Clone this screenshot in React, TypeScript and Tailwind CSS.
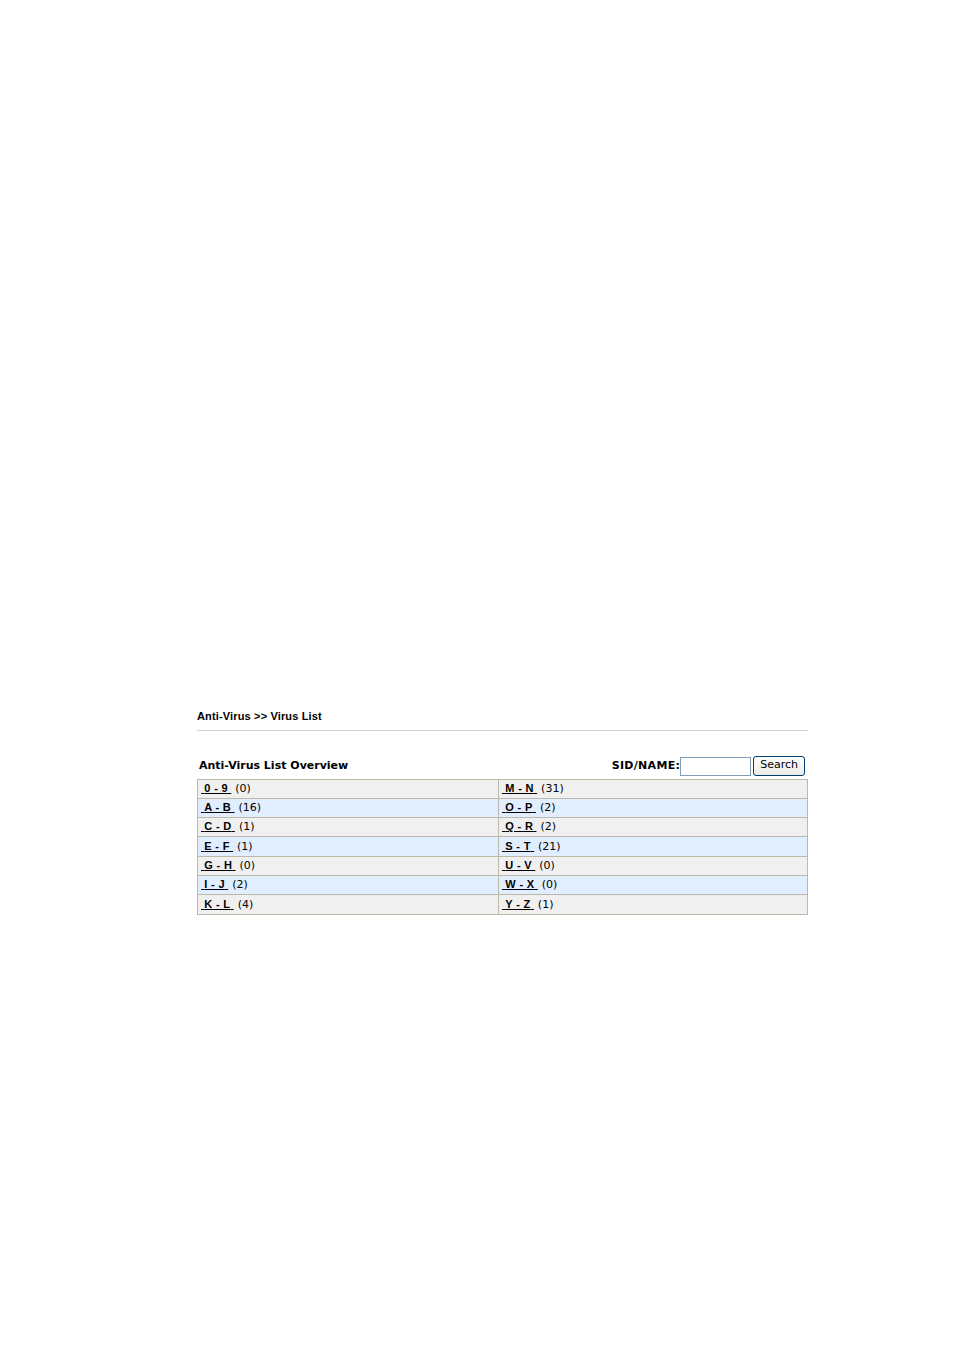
import React from 'react';

const rows: [string, number, string, number][] = [
  ['0 - 9', 0, 'M - N', 31],
  ['A - B', 16, 'O - P', 2],
  ['C - D', 1, 'Q - R', 2],
  ['E - F', 1, 'S - T', 21],
  ['G - H', 0, 'U - V', 0],
  ['I - J', 2, 'W - X', 0],
  ['K - L', 4, 'Y - Z', 1],
];

function Cell({ label, count, first }: { label: string; count: number; first?: boolean }) {
  return (
    <td className={`border border-[#bdb9a8] px-[3px] h-[19.3px] py-0 align-middle ${first ? 'w-[301px]' : ''}`}>
      <a href="#" className="font-bold underline text-black tracking-[0.3px]" style={{ fontFamily: '"Liberation Sans", Arial, sans-serif' }}>
        &nbsp;{label}&nbsp;
      </a>
      <span className="ml-[4px]">({count})</span>
    </td>
  );
}

export default function App() {
  return (
    <div className="min-h-[1351px] bg-white">
      <div className="pt-[708px] pl-[197px] w-[808px]">
        <div className="text-[11px] font-bold text-black pb-[5px] border-b border-[#d4d4d4] tracking-[0.15px]" style={{ fontFamily: '"Liberation Sans", Arial, sans-serif' }}>
          Anti-Virus &gt;&gt; Virus List
        </div>
        <div className="pt-[25px]" style={{ fontFamily: 'Verdana, "DejaVu Sans", sans-serif' }}>
          <div className="flex items-end justify-between">
            <div className="text-[11px] font-bold pl-[2px] pb-[4px]">Anti-Virus List Overview</div>
            <div className="flex items-end text-[11px] font-bold pb-[3px] pr-[3px]">
              <span className="tracking-[0.3px] pb-[1px]">SID/NAME:</span>
              <input type="text" className="w-[71px] h-[19px] border border-[#7f9db9] bg-white outline-none" />
              <button className="ml-[2px] h-[20px] px-[6px] border border-[#003c74] rounded-[3px] bg-gradient-to-b from-white to-[#ecebe6] text-[11px] font-normal">
                Search
              </button>
            </div>
          </div>
          <table className="w-full border-collapse border border-[#bdb9a8] text-[11px] text-black">
            <tbody>
              {rows.map((r, i) => (
                <tr key={i} className={i % 2 === 0 ? 'bg-[#f0f0f0]' : 'bg-[#e0eeff]'}>
                  <Cell label={r[0]} count={r[1]} first />
                  <Cell label={r[2]} count={r[3]} />
                </tr>
              ))}
            </tbody>
          </table>
        </div>
      </div>
    </div>
  );
}
